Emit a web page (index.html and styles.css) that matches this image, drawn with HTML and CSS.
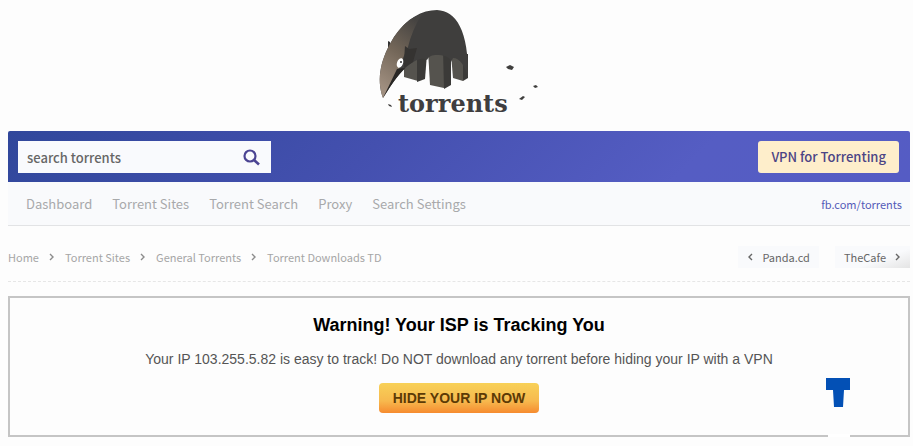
FILE: index.html
```
<!DOCTYPE html>
<html lang="en">
<head>
<meta charset="UTF-8">
<meta name="viewport" content="width=device-width, initial-scale=1.0">
<title>Torrent Downloads TD - Torrents</title>
<link rel="stylesheet" href="styles.css">
</head>
<body>

<header class="logo">
  <svg class="logo-art" width="178" height="120" viewBox="370 4 178 120" role="img" aria-label="torrents">
    <defs>
      <linearGradient id="fur" gradientUnits="userSpaceOnUse" x1="380" y1="86" x2="424" y2="26">
        <stop offset="0" stop-color="#a08f80"/>
        <stop offset="0.5" stop-color="#746759"/>
        <stop offset="1" stop-color="#454341"/>
      </linearGradient>
    </defs>
    <path fill="#333" d="M388 54v-13l2 1 1 6z"/>
    <path fill="#55534e" d="M404 60h14v21l-14-4z"/>
    <path fill="#3b3a38" d="M417 54h10l-2 25-8 3z"/>
    <path fill="#55534e" d="M428 50h16v38l-14-3z"/>
    <path fill="#3b3a38" d="M443 50h8v35l-7 4z"/>
    <path fill="#55534e" d="M451 54h12v27l-10-3z"/>
    <path fill="#3b3a38" d="M463 54h5v24l-5 3z"/>
    <path fill="#3f3e3d" d="M383 98C376 78 381 58 394 37C407 18 422 10 437 10C456 11 469 30 468 78C465 66 460 58 453 58L451 62C450 56 442 55 437 55C432 55 429 56 427 60C422 57 416 60 410 64C400 72 393 82 383 98z"/>
    <path fill="url(#fur)" d="M383 98C376 78 381 58 394 37C402 25 410 18 422 14Q412 30 408 47L403 58C399 70 391 84 383 98z"/>
    <path fill="#353331" d="M404 60l1-14 4 3 8-1-4 14-9 6z"/>
    <path fill="#292725" d="M383 98L397 69l8-1C396 77 390 87 383 98z"/>
    <ellipse cx="400" cy="63" rx="3" ry="5" fill="#fff" transform="rotate(20 400 63)"/>
    <circle cx="401" cy="62" r="1" fill="#333"/>
    <g fill="#3f3e3d">
      <path d="M506 67l4-2 4 2-2 3-4-1z"/>
      <path d="M533 86l3-1 2 2-3 1z"/>
      <path d="M519 99l4-3 2 1-3 3z"/>
      <path d="M388 104l3 1 1 2-3-1z"/>
    </g>
    <text class="logo-text" x="398" y="112">torrents</text>
  </svg>
</header>

<div class="topbar">
  <form class="search">
    <input class="search-input" type="text" placeholder="search torrents" aria-label="search torrents">
    <button class="search-button" type="submit" aria-label="Search">
      <svg width="18" height="18" viewBox="0 0 18 18" fill="none" stroke="#4b4493">
        <circle cx="7" cy="8" r="5.5" stroke-width="2.2"/>
        <path d="M11 12l5 4.500" stroke-width="2.6"/>
      </svg>
    </button>
  </form>
  <a class="vpn-button" href="#">VPN for Torrenting</a>
</div>

<nav class="menu">
  <a href="#">Dashboard</a>
  <a href="#">Torrent Sites</a>
  <a href="#">Torrent Search</a>
  <a href="#">Proxy</a>
  <a href="#">Search Settings</a>
  <a class="menu-social" href="#">fb.com/torrents</a>
</nav>

<div class="crumb-row">
  <nav class="breadcrumbs" aria-label="Breadcrumb">
    <a href="#">Home</a>
    <svg class="chevron" viewBox="0 0 6 8"><path d="M1 1l3 3-3 3"/></svg>
    <a href="#">Torrent Sites</a>
    <svg class="chevron" viewBox="0 0 6 8"><path d="M1 1l3 3-3 3"/></svg>
    <a href="#">General Torrents</a>
    <svg class="chevron" viewBox="0 0 6 8"><path d="M1 1l3 3-3 3"/></svg>
    <a href="#">Torrent Downloads TD</a>
  </nav>
  <div class="pager">
    <a href="#"><svg class="chevron" viewBox="0 0 6 8"><path d="M5 1l-3 3 3 3"/></svg>Panda.cd</a>
    <a class="pager-next" href="#">TheCafe<svg class="chevron" viewBox="0 0 6 8"><path d="M1 1l3 3-3 3"/></svg></a>
  </div>
</div>

<section class="warning">
  <h2>Warning! Your ISP is Tracking You</h2>
  <p>Your IP 103.255.5.82 is easy to track! Do NOT download any torrent before hiding your IP with a VPN</p>
  <button class="hide-button" type="button">HIDE YOUR IP NOW</button>
  <svg class="badge" width="26" height="62" viewBox="0 0 26 62" aria-hidden="true">
    <path fill="#0350b5" d="M1 2h24v12h-6l-1 17H9L8 14H1z"/>
    <path fill="#fff" d="M3 58h22v4H3z"/>
  </svg>
</section>

</body>
</html>
```
FILE: styles.css
```
* {
  box-sizing: border-box;
}

body {
  margin: 0;
  padding: 0 3px 0 8px;
  background-color: #fdfdfd;
  font-family: "Noto Sans CJK SC", "Noto Sans", sans-serif;
  font-size: 13px;
  line-height: 20px;
}

a {
  text-decoration: none;
}

.logo {
  display: flex;
  justify-content: center;
  padding: 4px 0 7px;
}

.logo-art {
  display: block;
}

.logo-text {
  font-family: "DejaVu Serif", serif;
  font-size: 24px;
  font-weight: bold;
  fill: #3f3e40;
}

.topbar {
  display: flex;
  align-items: center;
  justify-content: space-between;
  padding: 10px 11px 9px 10px;
  border-radius: 2px 2px 0 0;
  background-image: linear-gradient(135deg, #30479b, #4450af 40%, #555dc3 75%, #555cc4);
}

.search {
  display: flex;
  width: 253px;
  height: 32px;
  background-color: #f9fafd;
}

.search-input {
  flex: 1;
  min-width: 0;
  padding: 0 9px;
  border: none;
  background: none;
  color: #666;
  font: 500 13px "Noto Sans CJK SC", "Noto Sans", sans-serif;
}

.search-input::placeholder {
  color: #666;
  opacity: 1;
}

.search-button {
  display: flex;
  align-items: center;
  justify-content: center;
  width: 38px;
  padding: 0;
  border: none;
  background: none;
  cursor: pointer;
}

.vpn-button {
  padding: 6px 13px;
  border-radius: 3px;
  background-color: #feeecb;
  color: #4b4485;
  font-weight: 500;
}

.menu {
  display: flex;
  align-items: center;
  gap: 20px;
  padding: 12px 8px 11px 18px;
  border-bottom: 1px solid #e2e3e5;
  background-color: #f9fafc;
}

.menu a {
  color: #a8a9ab;
}

.menu .menu-social {
  margin-left: auto;
  color: #545bb8;
  font-size: 11px;
}

.crumb-row {
  display: flex;
  align-items: center;
  justify-content: space-between;
  padding: 20px 0 13px;
  border-bottom: 1px dashed #e6e6e6;
  font-size: 11px;
}

.breadcrumbs {
  display: flex;
  align-items: center;
  gap: 10px;
}

.breadcrumbs a {
  color: #a6a6a6;
}

.chevron {
  width: 6px;
  height: 8px;
  fill: none;
  stroke: #8c8c8c;
  stroke-width: 1.4;
}

.pager {
  display: flex;
  gap: 16px;
}

.pager a {
  display: flex;
  align-items: center;
  gap: 9px;
  padding: 1px 9px;
  background-color: #f9fafc;
  color: #666;
}

.pager .chevron {
  stroke: #666;
}

.pager .pager-next {
  background-image: linear-gradient(160deg, transparent 60%, #e4e4e4);
}

.warning {
  position: relative;
  margin-top: 14px;
  padding: 17px 10px 22px;
  border: 2px solid #c5c5c5;
  font-family: "Liberation Sans", Arial, sans-serif;
  text-align: center;
}

.warning h2 {
  margin: 0;
  color: #000;
  font-size: 18px;
  line-height: 20px;
}

.warning p {
  margin: 14px 0;
  color: #555;
  font-size: 14px;
  line-height: 20px;
}

.hide-button {
  padding: 0 14px;
  border: none;
  border-radius: 4px;
  background-image: linear-gradient(#f8d158, #f7b94e 60%, #f68b2f);
  color: #5c3a05;
  font: bold 14px/30px "Liberation Sans", Arial, sans-serif;
  cursor: pointer;
}

/* floating badge, its foot covers the box border */
.badge {
  position: absolute;
  right: 57px;
  bottom: -3px;
}
```
